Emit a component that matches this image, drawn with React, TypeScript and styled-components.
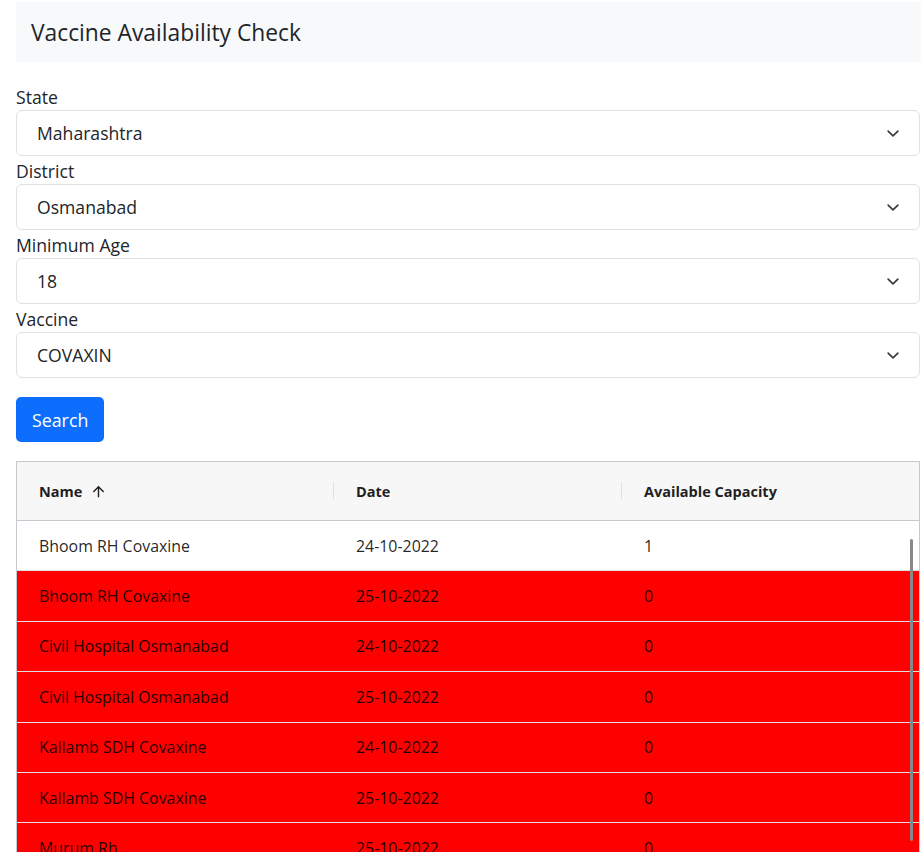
import React from 'react';
import styled, { createGlobalStyle } from 'styled-components';

interface Slot {
  name: string;
  date: string;
  capacity: number;
}

const slots: Slot[] = [
  { name: 'Bhoom RH Covaxine', date: '24-10-2022', capacity: 1 },
  { name: 'Bhoom RH Covaxine', date: '25-10-2022', capacity: 0 },
  { name: 'Civil Hospital Osmanabad', date: '24-10-2022', capacity: 0 },
  { name: 'Civil Hospital Osmanabad', date: '25-10-2022', capacity: 0 },
  { name: 'Kallamb SDH Covaxine', date: '24-10-2022', capacity: 0 },
  { name: 'Kallamb SDH Covaxine', date: '25-10-2022', capacity: 0 },
  { name: 'Murum Rh', date: '25-10-2022', capacity: 0 },
  { name: 'Paranda RH Covaxine', date: '25-10-2022', capacity: 0 },
];

const fields = [
  { label: 'State', value: 'Maharashtra' },
  { label: 'District', value: 'Osmanabad' },
  { label: 'Minimum Age', value: '18' },
  { label: 'Vaccine', value: 'COVAXIN' },
];

const GlobalStyle = createGlobalStyle`
  body {
    margin: 0;
    background: #fff;
    color: #212529;
    font-family: 'Open Sans', 'Noto Sans', sans-serif;
    overflow: hidden;
  }
`;

const Chevron = () => (
  <svg width="16" height="13" viewBox="0 0 16 16" fill="none">
    <path d="m2 5 6 6 6-6" stroke="#343a40" strokeWidth="2" strokeLinecap="round" strokeLinejoin="round" />
  </svg>
);

const SortArrow = () => (
  <svg width="17" height="17" viewBox="0 0 24 24" fill="#1f1f1f">
    <path d="M4 12l1.41 1.41L11 7.83V20h2V7.83l5.58 5.59L20 12l-8-8-8 8z" />
  </svg>
);

const App: React.FC = () => {
  return (
    <>
      <GlobalStyle />
      <Page>
        <TitleBar>
          <Title>Vaccine Availability Check</Title>
        </TitleBar>
        <Form>
          {fields.map((f) => (
            <Field key={f.label}>
              <Label>{f.label}</Label>
              <Select>
                <span>{f.value}</span>
                <Chevron />
              </Select>
            </Field>
          ))}
          <Button>Search</Button>
          <Grid>
            <HeaderRow>
              <HeaderCell separator>
                Name
                <SortIcon>
                  <SortArrow />
                </SortIcon>
              </HeaderCell>
              <HeaderCell separator>Date</HeaderCell>
              <HeaderCell>Available Capacity</HeaderCell>
            </HeaderRow>
            <Body>
              {slots.map((s, i) => (
                <Row key={i} empty={s.capacity === 0}>
                  <Cell>{s.name}</Cell>
                  <Cell>{s.date}</Cell>
                  <Cell>{s.capacity}</Cell>
                </Row>
              ))}
              <Thumb />
            </Body>
          </Grid>
        </Form>
      </Page>
    </>
  );
};

const Page = styled.div`
  padding: 2px 0 0 16px;
`;

const TitleBar = styled.div`
  background-color: #f8f9fa;
  height: 60px;
  display: flex;
  align-items: center;
  padding-left: 15px;
`;

const Title = styled.h4`
  margin: 0;
  font-size: 22.8px;
  font-weight: 400;
  color: #212529;
  padding-top: 1px;
`;

const Form = styled.div`
  margin-top: 20px;
  margin-right: 1px;
  display: flex;
  flex-direction: column;
  align-items: flex-start;
`;

const Field = styled.div`
  width: 100%;
`;

const Label = styled.div`
  font-size: 17.6px;
  line-height: 30px;
  height: 28px;
`;

const Select = styled.div`
  box-sizing: border-box;
  height: 46px;
  border: 1px solid #dee2e6;
  border-radius: 6px;
  display: flex;
  align-items: center;
  justify-content: space-between;
  padding: 0 18px 0 20px;
  font-size: 17.6px;
  color: #212529;
`;

const Button = styled.button`
  margin-top: 19px;
  height: 45px;
  padding: 0 16px;
  border: none;
  border-radius: 5px;
  background-color: #0d6efd;
  color: #fff;
  font-family: inherit;
  font-size: 17.8px;
`;

const Grid = styled.div`
  margin-top: 19px;
  width: 100%;
  box-sizing: border-box;
  border: 1px solid #c6c9cf;
  border-bottom: none;
  font-size: 15.9px;
  color: rgba(0, 0, 0, 0.87);
`;

const columns = '317px 288px 1fr';

const HeaderRow = styled.div`
  display: grid;
  grid-template-columns: ${columns};
  height: 58px;
  background-color: #f7f7f7;
  border-bottom: 1px solid #c6c9cf;
`;

const HeaderCell = styled.div<{ separator?: boolean }>`
  display: flex;
  align-items: center;
  padding-left: 22px;
  font-weight: 700;
  font-size: 14.5px;
  color: #1f1f1f;
  position: relative;
  ${({ separator }) =>
    separator &&
    `
    &::after {
      content: '';
      position: absolute;
      right: 0;
      top: 20px;
      height: 17px;
      width: 1px;
      background: #e0e0e0;
    }
  `}
`;

const SortIcon = styled.span`
  display: flex;
  margin-left: 8px;
`;

const Body = styled.div`
  position: relative;
  height: 332px;
  overflow: hidden;
`;

const Row = styled.div<{ empty: boolean }>`
  display: grid;
  grid-template-columns: ${columns};
  height: 50.4px;
  box-sizing: border-box;
  border-bottom: 1px solid #e0e0e0;
  background-color: ${({ empty }) => (empty ? '#ff0000' : '#ffffff')};
`;

const Cell = styled.div`
  display: flex;
  align-items: center;
  padding-left: 22px;
`;

const Thumb = styled.div`
  position: absolute;
  top: 18px;
  right: 6px;
  width: 3px;
  height: 302px;
  border-radius: 2px;
  background-color: #888;
`;

export default App;
